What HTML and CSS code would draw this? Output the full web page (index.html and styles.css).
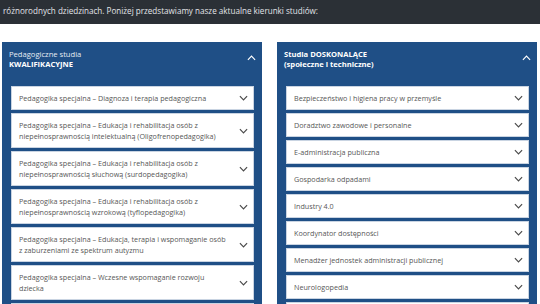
FILE: index.html
```html
<!DOCTYPE html>
<html lang="pl">
<head>
    <meta charset="UTF-8">
    <title>Kierunki studiów</title>
    <link rel="stylesheet" href="styles.css">
</head>
<body>
<div class="intro">
    <p>Oferujemy szeroki wybór studiów podyplomowych, które pozwalają zdobyć nowe kwalifikacje i kompetencje w<br>
    różnorodnych dziedzinach. Poniżej przedstawiamy nasze aktualne kierunki studiów:</p>
</div>

<div class="columns">
    <div class="panel">
        <div class="panel-head">
            <div class="panel-title">
                <span class="light">Pedagogiczne studia</span>
                <b>KWALIFIKACYJNE</b>
            </div>
            <svg class="chev up" viewBox="0 0 10 6"><path d="M1 5 L5 1 L9 5"/></svg>
        </div>
        <div class="items">
            <div class="item"><span>Pedagogika specjalna – Diagnoza i terapia pedagogiczna</span><svg class="chev" viewBox="0 0 10 6"><path d="M1 1 L5 5 L9 1"/></svg></div>
            <div class="item"><span>Pedagogika specjalna – Edukacja i rehabilitacja osób z<br>niepełnosprawnością intelektualną (Oligofrenopedagogika)</span><svg class="chev" viewBox="0 0 10 6"><path d="M1 1 L5 5 L9 1"/></svg></div>
            <div class="item"><span>Pedagogika specjalna – Edukacja i rehabilitacja osób z<br>niepełnosprawnością słuchową (surdopedagogika)</span><svg class="chev" viewBox="0 0 10 6"><path d="M1 1 L5 5 L9 1"/></svg></div>
            <div class="item"><span>Pedagogika specjalna – Edukacja i rehabilitacja osób z<br>niepełnosprawnością wzrokową (tyflopedagogika)</span><svg class="chev" viewBox="0 0 10 6"><path d="M1 1 L5 5 L9 1"/></svg></div>
            <div class="item"><span>Pedagogika specjalna – Edukacja, terapia i wspomaganie osób<br>z zaburzeniami ze spektrum autyzmu</span><svg class="chev" viewBox="0 0 10 6"><path d="M1 1 L5 5 L9 1"/></svg></div>
            <div class="item"><span>Pedagogika specjalna – Wczesne wspomaganie rozwoju<br>dziecka</span><svg class="chev" viewBox="0 0 10 6"><path d="M1 1 L5 5 L9 1"/></svg></div>
            <div class="item"><span>Pedagogika specjalna – Terapia pedagogiczna</span><svg class="chev" viewBox="0 0 10 6"><path d="M1 1 L5 5 L9 1"/></svg></div>
        </div>
    </div>

    <div class="panel">
        <div class="panel-head">
            <div class="panel-title">
                <b>Studia DOSKONALĄCE</b>
                <b>(społeczne i techniczne)</b>
            </div>
            <svg class="chev up" viewBox="0 0 10 6"><path d="M1 5 L5 1 L9 5"/></svg>
        </div>
        <div class="items">
            <div class="item"><span>Bezpieczeństwo i higiena pracy w przemyśle</span><svg class="chev" viewBox="0 0 10 6"><path d="M1 1 L5 5 L9 1"/></svg></div>
            <div class="item"><span>Doradztwo zawodowe i personalne</span><svg class="chev" viewBox="0 0 10 6"><path d="M1 1 L5 5 L9 1"/></svg></div>
            <div class="item"><span>E-administracja publiczna</span><svg class="chev" viewBox="0 0 10 6"><path d="M1 1 L5 5 L9 1"/></svg></div>
            <div class="item"><span>Gospodarka odpadami</span><svg class="chev" viewBox="0 0 10 6"><path d="M1 1 L5 5 L9 1"/></svg></div>
            <div class="item"><span>Industry 4.0</span><svg class="chev" viewBox="0 0 10 6"><path d="M1 1 L5 5 L9 1"/></svg></div>
            <div class="item"><span>Koordynator dostępności</span><svg class="chev" viewBox="0 0 10 6"><path d="M1 1 L5 5 L9 1"/></svg></div>
            <div class="item"><span>Menadżer jednostek administracji publicznej</span><svg class="chev" viewBox="0 0 10 6"><path d="M1 1 L5 5 L9 1"/></svg></div>
            <div class="item"><span>Neurologopedia</span><svg class="chev" viewBox="0 0 10 6"><path d="M1 1 L5 5 L9 1"/></svg></div>
            <div class="item"><span>Pedagogika opiekuńczo-wychowawcza</span><svg class="chev" viewBox="0 0 10 6"><path d="M1 1 L5 5 L9 1"/></svg></div>
        </div>
    </div>
</div>
</body>
</html>
```

FILE: styles.css
```css
body { margin: 0; background: #fff; font-family: "Open Sans", "Noto Sans", Arial, sans-serif; overflow: hidden; height: 304px; }
.intro { background: #2b3036; height: 24px; overflow: hidden; }
.intro p { margin: -13px 0 0 0; padding: 0 3px; font-size: 8.1px; line-height: 16px; color: #e2e4e8; white-space: nowrap; }
.columns { display: flex; gap: 15px; padding: 18px 3px 0 2px; }
.panel { flex: 1; background: #1f4f86; padding: 0 8px 0 9px; }
.panel-head { display: flex; align-items: center; justify-content: space-between; height: 32px; margin: 0 -2px 12px -2px; color: #fff; }
.panel-title { display: flex; flex-direction: column; font-size: 7.6px; line-height: 10px; padding-top: 1px; }
.panel-title .light { color: #e6ecf4; }
.panel-title b { font-weight: 700; }
.items { display: flex; flex-direction: column; gap: 3px; }
.item { display: flex; align-items: center; justify-content: space-between; background: #fff; border: 1px solid #c9d4e2; padding: 5.5px 5px 5.5px 7px; min-height: 11px; font-size: 7.2px; line-height: 11px; color: #575757; white-space: nowrap; }
.chev { width: 9px; height: 6px; flex: none; }
.chev path { fill: none; stroke: #4a4a4a; stroke-width: 1.3; }
.chev.up path { stroke: #fff; }
```
